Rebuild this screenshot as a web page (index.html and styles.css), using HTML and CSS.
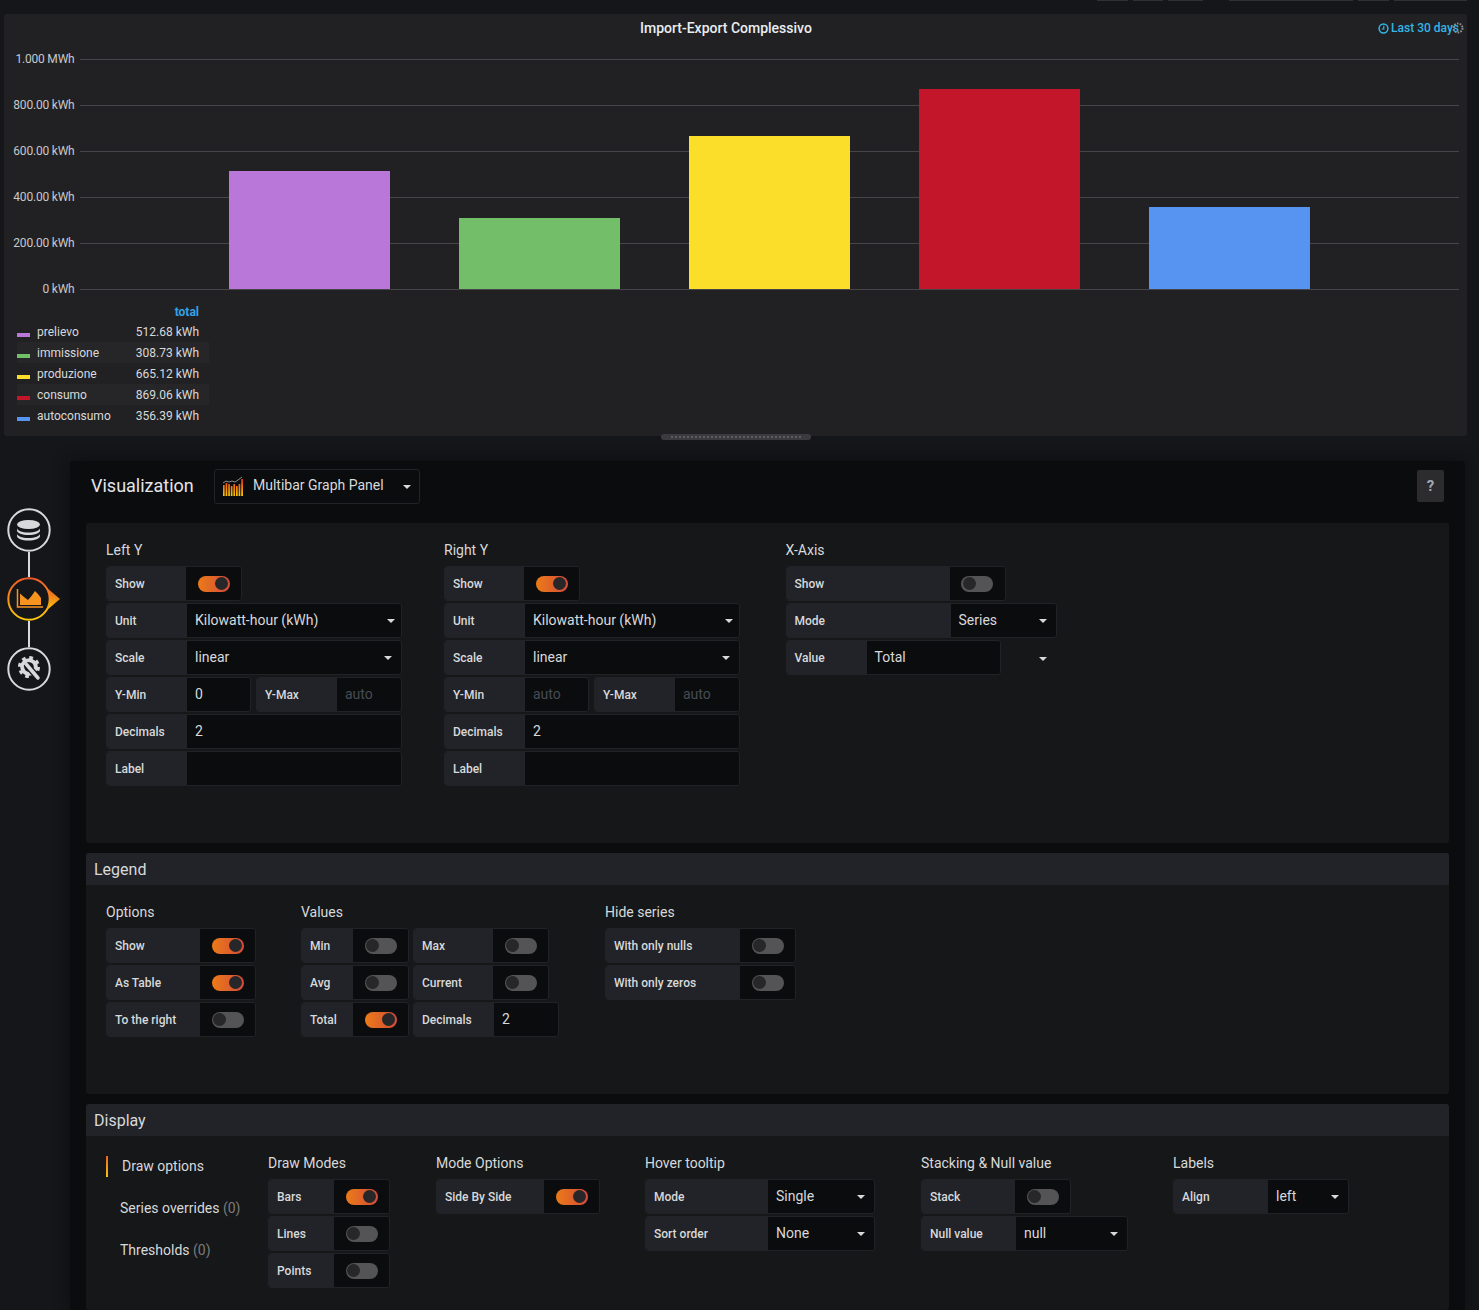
FILE: index.html
```html
<!DOCTYPE html>
<html lang="en">
<head>
    <meta charset="UTF-8">
    <meta name="viewport" content="width=device-width, initial-scale=1.0">
    <title>Import-Export Complessivo - Edit</title>
    <link rel="stylesheet" href="styles.css">
</head>
<body>

<!-- bottoms of the toolbar buttons, scrolled off the top -->
<div class="topstrip">
    <span class="stub w31"></span><span class="stub w30"></span><span class="stub w35 gap-big"></span>
    <span class="stub w124"></span><span class="stub w31"></span><span class="stub w73"></span>
</div>

<section class="panel">
    <header class="panel-head">
        <span></span>
        <h2 class="panel-title">Import-Export Complessivo</h2>
        <span class="panel-time">
            <svg class="clock" width="11" height="11" viewBox="0 0 11 11">
                <circle cx="5.5" cy="5.5" r="4.4" fill="none" stroke="#33b5e5" stroke-width="1.5"/>
                <path d="M5.8 2.8V6H3.6" fill="none" stroke="#33b5e5" stroke-width="1.2"/>
            </svg>Last 30 days
        </span>
        <svg class="spinner" width="12" height="12" viewBox="0 0 12 12">
            <circle cx="6" cy="6" r="4.5" fill="none" stroke="#8e8e8e" stroke-width="2" stroke-dasharray="1.6 1.2"/>
        </svg>
    </header>

    <svg class="chart" width="1463" height="258" viewBox="4 42 1463 258">
        <g class="grid">
            <line x1="80" x2="1459" y1="59.5" y2="59.5"/>
            <line x1="80" x2="1459" y1="105.5" y2="105.5"/>
            <line x1="80" x2="1459" y1="151.5" y2="151.5"/>
            <line x1="80" x2="1459" y1="197.5" y2="197.5"/>
            <line x1="80" x2="1459" y1="243.5" y2="243.5"/>
            <line x1="80" x2="1459" y1="289.5" y2="289.5"/>
        </g>
        <g class="ticks">
            <text x="74.5" y="63">1.000 MWh</text>
            <text x="74.5" y="109">800.00 kWh</text>
            <text x="74.5" y="155">600.00 kWh</text>
            <text x="74.5" y="201">400.00 kWh</text>
            <text x="74.5" y="247">200.00 kWh</text>
            <text x="74.5" y="293">0 kWh</text>
        </g>
        <rect x="229" y="171" width="161" height="118" fill="#b877d9"/>
        <rect x="459" y="218" width="161" height="71" fill="#73bf69"/>
        <rect x="689" y="136" width="161" height="153" fill="#fade2a"/>
        <rect x="919" y="89" width="161" height="200" fill="#c4162a"/>
        <rect x="1149" y="207" width="161" height="82" fill="#5794f2"/>
    </svg>

    <table class="legend">
        <tr class="legend-head"><th></th><th class="legend-total">total</th></tr>
        <tr><td><span class="swatch purple"></span>prelievo</td><td class="legend-val">512.68 kWh</td></tr>
        <tr><td><span class="swatch green"></span>immissione</td><td class="legend-val">308.73 kWh</td></tr>
        <tr><td><span class="swatch yellow"></span>produzione</td><td class="legend-val">665.12 kWh</td></tr>
        <tr><td><span class="swatch red"></span>consumo</td><td class="legend-val">869.06 kWh</td></tr>
        <tr><td><span class="swatch blue"></span>autoconsumo</td><td class="legend-val">356.39 kWh</td></tr>
    </table>

    <div class="resize-handle"></div>
</section>

<div class="main">
    <nav class="sidebar">
        <svg class="step" width="44" height="44" viewBox="0 0 44 44">
            <circle cx="22" cy="22" r="20.700" fill="none" stroke="#d8d9da" stroke-width="2"/>
            <ellipse cx="21.500" cy="16.500" rx="11.500" ry="4.500" fill="#d8d9da"/>
            <path d="M10 20v2.500c0 2.500 5 4.500 11.500 4.500s11.500-2 11.500-4.500V20c0 2.500-5 4.500-11.500 4.500S10 22.500 10 20z" fill="#d8d9da"/>
            <path d="M10 25.500V28c0 2.500 5 4.500 11.500 4.500S33 30.500 33 28v-2.500c0 2.500-5 4.500-11.500 4.500S10 28 10 25.500z" fill="#d8d9da"/>
        </svg>
        <div class="step-line"></div>
        <svg class="step" width="53" height="44" viewBox="0 0 53 44">
            <defs>
                <linearGradient id="stepGrad" x1="0" y1="0" x2="0" y2="1">
                    <stop offset="0" stop-color="#f05a28"/>
                    <stop offset="1" stop-color="#fbca0a"/>
                </linearGradient>
            </defs>
            <path d="M40 11L53 22 40 33z" fill="url(#stepGrad)"/>
            <circle cx="22" cy="22" r="20.700" fill="#141619" stroke="url(#stepGrad)" stroke-width="2"/>
            <path d="M13 28V16.500L17 20l4 3 3.500-4L28 14l3 3 3 4v7z" fill="#f79420"/>
            <path d="M10.500 12v18H36" fill="none" stroke="#f79420" stroke-width="1.500"/>
        </svg>
        <div class="step-line tall"></div>
        <svg class="step" width="44" height="44" viewBox="0 0 44 44">
            <circle cx="22" cy="22" r="20.700" fill="none" stroke="#d8d9da" stroke-width="2"/>
            <circle cx="22" cy="20" r="6.800" fill="none" stroke="#d8d9da" stroke-width="4"/>
            <circle cx="22" cy="20" r="9.500" fill="none" stroke="#d8d9da" stroke-width="3" stroke-dasharray="3.700 3.760"/>
            <path d="M19 17l12 14" stroke="#141619" stroke-width="6.500" fill="none"/>
            <path d="M19.500 17.500L31 31" stroke="#d8d9da" stroke-width="3.500" stroke-linecap="round" fill="none"/>
        </svg>
    </nav>

    <div class="editor">
        <div class="editor-head">
            <h3 class="editor-title">Visualization</h3>
            <div class="picker">
                <svg class="picker-icon" width="20" height="20" viewBox="0 0 20 20">
                    <defs>
                        <linearGradient id="barGrad" gradientUnits="userSpaceOnUse" x1="0" y1="3" x2="0" y2="20">
                            <stop offset="0" stop-color="#e0301e"/>
                            <stop offset="1" stop-color="#fbca0a"/>
                        </linearGradient>
                    </defs>
                    <path d="M0 7l3-2 3 1 3-1 3 1 3-2 4-3" fill="none" stroke="#8e8e8e" stroke-width="1"/>
                    <g fill="url(#barGrad)">
                        <rect x="0" y="9" width="1.700" height="11"/>
                        <rect x="2.600" y="7" width="1.700" height="13"/>
                        <rect x="5.200" y="8" width="1.700" height="12"/>
                        <rect x="7.800" y="10" width="1.700" height="10"/>
                        <rect x="10.400" y="8" width="1.700" height="12"/>
                        <rect x="13" y="10" width="1.700" height="10"/>
                        <rect x="15.600" y="8" width="1.700" height="12"/>
                        <rect x="18.200" y="3" width="1.800" height="17"/>
                    </g>
                </svg>
                <span class="picker-name">Multibar Graph Panel</span>
                <i class="caret"></i>
            </div>
            <button class="help">?</button>
        </div>

        <div class="section first">
            <div class="section-body">
                <div class="col col-lefty">
                    <h5 class="col-title">Left Y</h5>
                    <div class="row"><div class="group"><label class="lbl w80">Show</label><div class="toggle"><span class="switch on"></span></div></div></div>
                    <div class="row"><div class="group"><label class="lbl w81">Unit</label><div class="field w215"><span>Kilowatt-hour (kWh)</span><i class="caret near"></i></div></div></div>
                    <div class="row"><div class="group"><label class="lbl w81">Scale</label><div class="field w215"><span>linear</span><i class="caret"></i></div></div></div>
                    <div class="row">
                        <div class="group"><label class="lbl w81">Y-Min</label><div class="field w64"><span>0</span></div></div>
                        <div class="group"><label class="lbl w81">Y-Max</label><div class="field w65 ph"><span>auto</span></div></div>
                    </div>
                    <div class="row"><div class="group"><label class="lbl w81">Decimals</label><div class="field w215"><span>2</span></div></div></div>
                    <div class="row"><div class="group"><label class="lbl w81">Label</label><div class="field w215"></div></div></div>
                </div>
                <div class="col col-righty">
                    <h5 class="col-title">Right Y</h5>
                    <div class="row"><div class="group"><label class="lbl w80">Show</label><div class="toggle"><span class="switch on"></span></div></div></div>
                    <div class="row"><div class="group"><label class="lbl w81">Unit</label><div class="field w215"><span>Kilowatt-hour (kWh)</span><i class="caret near"></i></div></div></div>
                    <div class="row"><div class="group"><label class="lbl w81">Scale</label><div class="field w215"><span>linear</span><i class="caret"></i></div></div></div>
                    <div class="row">
                        <div class="group"><label class="lbl w81">Y-Min</label><div class="field w64 ph"><span>auto</span></div></div>
                        <div class="group"><label class="lbl w81">Y-Max</label><div class="field w65 ph"><span>auto</span></div></div>
                    </div>
                    <div class="row"><div class="group"><label class="lbl w81">Decimals</label><div class="field w215"><span>2</span></div></div></div>
                    <div class="row"><div class="group"><label class="lbl w81">Label</label><div class="field w215"></div></div></div>
                </div>
                <div class="col">
                    <h5 class="col-title">X-Axis</h5>
                    <div class="row"><div class="group"><label class="lbl w164">Show</label><div class="toggle"><span class="switch"></span></div></div></div>
                    <div class="row"><div class="group"><label class="lbl w165">Mode</label><div class="field w106"><span>Series</span><i class="caret"></i></div></div></div>
                    <div class="row row-center"><div class="group"><label class="lbl w81">Value</label><div class="field w134"><span>Total</span></div></div><i class="caret outside"></i></div>
                </div>
            </div>
        </div>

        <div class="section legend-section">
            <div class="section-head">Legend</div>
            <div class="section-body">
                <div class="col col-options">
                    <h5 class="col-title">Options</h5>
                    <div class="row"><div class="group"><label class="lbl w94">Show</label><div class="toggle"><span class="switch on"></span></div></div></div>
                    <div class="row"><div class="group"><label class="lbl w94">As Table</label><div class="toggle"><span class="switch on"></span></div></div></div>
                    <div class="row"><div class="group"><label class="lbl w94">To the right</label><div class="toggle"><span class="switch"></span></div></div></div>
                </div>
                <div class="col col-values">
                    <h5 class="col-title">Values</h5>
                    <div class="row tight">
                        <div class="group"><label class="lbl w52">Min</label><div class="toggle"><span class="switch"></span></div></div>
                        <div class="group"><label class="lbl w80">Max</label><div class="toggle"><span class="switch"></span></div></div>
                    </div>
                    <div class="row tight">
                        <div class="group"><label class="lbl w52">Avg</label><div class="toggle"><span class="switch"></span></div></div>
                        <div class="group"><label class="lbl w80">Current</label><div class="toggle"><span class="switch"></span></div></div>
                    </div>
                    <div class="row tight">
                        <div class="group"><label class="lbl w52">Total</label><div class="toggle"><span class="switch on"></span></div></div>
                        <div class="group"><label class="lbl w81">Decimals</label><div class="field w65"><span>2</span></div></div>
                    </div>
                </div>
                <div class="col">
                    <h5 class="col-title">Hide series</h5>
                    <div class="row"><div class="group"><label class="lbl w135">With only nulls</label><div class="toggle"><span class="switch"></span></div></div></div>
                    <div class="row"><div class="group"><label class="lbl w135">With only zeros</label><div class="toggle"><span class="switch"></span></div></div></div>
                </div>
            </div>
        </div>

        <div class="section display-section">
            <div class="section-head">Display</div>
            <div class="section-body">
                <ul class="tabs">
                    <li class="tab active">Draw options</li>
                    <li class="tab">Series overrides <span class="muted">(0)</span></li>
                    <li class="tab">Thresholds <span class="muted">(0)</span></li>
                </ul>
                <div class="col col-modes">
                    <h5 class="col-title">Draw Modes</h5>
                    <div class="row"><div class="group"><label class="lbl w66">Bars</label><div class="toggle"><span class="switch on"></span></div></div></div>
                    <div class="row"><div class="group"><label class="lbl w66">Lines</label><div class="toggle"><span class="switch"></span></div></div></div>
                    <div class="row"><div class="group"><label class="lbl w66">Points</label><div class="toggle"><span class="switch"></span></div></div></div>
                </div>
                <div class="col col-modeopts">
                    <h5 class="col-title">Mode Options</h5>
                    <div class="row"><div class="group"><label class="lbl w108">Side By Side</label><div class="toggle"><span class="switch on"></span></div></div></div>
                </div>
                <div class="col col-hover">
                    <h5 class="col-title">Hover tooltip</h5>
                    <div class="row"><div class="group"><label class="lbl w122">Mode</label><div class="field w107"><span>Single</span><i class="caret"></i></div></div></div>
                    <div class="row"><div class="group"><label class="lbl w122">Sort order</label><div class="field w107"><span>None</span><i class="caret"></i></div></div></div>
                </div>
                <div class="col col-stack">
                    <h5 class="col-title">Stacking &amp; Null value</h5>
                    <div class="row"><div class="group"><label class="lbl w94">Stack</label><div class="toggle"><span class="switch"></span></div></div></div>
                    <div class="row"><div class="group"><label class="lbl w95">Null value</label><div class="field w112"><span>null</span><i class="caret"></i></div></div></div>
                </div>
                <div class="col">
                    <h5 class="col-title">Labels</h5>
                    <div class="row"><div class="group"><label class="lbl w95">Align</label><div class="field w80"><span>left</span><i class="caret"></i></div></div></div>
                </div>
            </div>
        </div>
    </div>
</div>

</body>
</html>
```

FILE: styles.css
```css
* {
    box-sizing: border-box;
}

html, body {
    margin: 0;
    height: 1310px;
    overflow: hidden;
}

body {
    background-color: #141619;
    color: #d8d9da;
    font-family: Roboto, "Liberation Sans", sans-serif;
    font-size: 14px;
}

h2, h3, h5, ul {
    margin: 0;
    padding: 0;
    font-weight: 400;
}

/* top strip */
.topstrip {
    display: flex;
    justify-content: flex-end;
    gap: 5px;
    height: 14px;
    padding-right: 12px;
}

.stub {
    height: 1px;
    background-color: #303135;
}

.stub.w31 { width: 31px; }
.stub.w30 { width: 30px; }
.stub.w35 { width: 35px; }
.stub.w124 { width: 124px; }
.stub.w73 { width: 73px; }
.gap-big { margin-right: 21px; }

/* graph panel */
.panel {
    position: relative;
    width: 1463px;
    height: 422px;
    margin-left: 4px;
    background-color: #212124;
    border-radius: 3px;
}

.panel-head {
    position: relative;
    display: grid;
    grid-template-columns: 636px auto 1fr;
    height: 28px;
    line-height: 28px;
}

.panel-title {
    font-size: 14px;
    font-weight: 500;
    color: #e9edf2;
}

.panel-time {
    justify-self: end;
    padding-right: 8px;
    font-size: 12px;
    font-weight: 500;
    color: #33b5e5;
}

.clock {
    margin-right: 2px;
    vertical-align: -2px;
}

.spinner {
    position: absolute;
    top: 8px;
    right: 3px;
}

.chart {
    display: block;
}

.grid line {
    stroke: #46464a;
    stroke-width: 1;
}

.ticks text {
    fill: #c7c8ca;
    font-size: 12px;
    letter-spacing: -0.2px;
    text-anchor: end;
}

.legend {
    margin: 1px 0 0 13px;
    width: 192px;
    border-collapse: collapse;
    font-size: 12px;
    color: #d8d9da;
}

.legend tr {
    height: 21px;
}

.legend tr.legend-head {
    height: 20px;
}

.legend tr:nth-child(odd) td {
    background-color: #262628;
}

.legend td, .legend th {
    padding: 0;
}

.legend-total, .legend-val {
    padding-right: 10px !important;
    text-align: right;
}

.legend-total {
    padding-top: 2px !important;
    font-weight: 700;
    color: #33a2e5;
}

.swatch {
    display: inline-block;
    width: 13px;
    height: 4px;
    margin-right: 7px;
    vertical-align: -1px;
}

.purple { background-color: #b877d9; }
.green { background-color: #73bf69; }
.yellow { background-color: #fade2a; }
.red { background-color: #c4162a; }
.blue { background-color: #5794f2; }

.resize-handle {
    position: absolute;
    left: 657px;
    bottom: -4px;
    width: 150px;
    height: 6px;
    border-radius: 3px;
    background: repeating-linear-gradient(90deg, #5c5c60 0 2px, transparent 2px 4px) center / 130px 2px no-repeat, #3b3b3e;
}

/* edit area */
.main {
    display: flex;
    margin-top: 25px;
}

.sidebar {
    display: flex;
    flex-direction: column;
    width: 70px;
    padding: 47px 0 0 7px;
}

.step {
    display: block;
}

.step-line {
    width: 2px;
    height: 25px;
    margin-left: 21px;
    background-color: #d8d9da;
}

.step-line.tall {
    height: 26px;
}

.editor {
    width: 1395px;
    height: 849px;
    padding: 0 16px;
    background-color: #0b0c0e;
    border-radius: 3px 3px 0 0;
    box-shadow: 0 0 16px rgba(11, 12, 14, 0.8);
}

.editor-head {
    display: flex;
    align-items: flex-start;
    height: 62px;
    padding: 8px 5px 0 5px;
}

.editor-title {
    width: 123px;
    font-size: 18px;
    line-height: 33px;
    color: #e3e5e8;
}

.picker {
    display: flex;
    align-items: center;
    width: 206px;
    height: 35px;
    padding: 0 7px 0 8px;
    border: 1px solid #212328;
    border-radius: 3px;
}

.picker .caret {
    margin-right: 1px;
}

.picker-icon {
    margin: -2px 10px 0 0;
}

.picker-name {
    flex: 1;
    margin-top: -3px;
}

.help {
    width: 27px;
    height: 32px;
    margin: 1px 0 0 auto;
    padding: 0;
    border: none;
    border-radius: 2px;
    background-color: #2c2c2f;
    color: #9fa7b3;
    font-family: Roboto, "Liberation Sans", sans-serif;
    font-size: 15px;
    font-weight: 700;
}

.section {
    margin-bottom: 10px;
    background-color: #161719;
    border-radius: 3px;
}

.first { height: 320px; }
.legend-section { height: 241px; }
.display-section { height: 206px; margin-bottom: 0; }

.section-head {
    height: 32px;
    padding-left: 8px;
    background-color: #212328;
    font-size: 16px;
    line-height: 33px;
    color: #d8d9da;
    border-radius: 3px 3px 0 0;
}

.section-body {
    display: flex;
    padding: 15px 0 0 20px;
}

.col-title {
    height: 24px;
    margin-bottom: 4px;
    font-size: 14px;
    line-height: 24px;
}

.col-lefty { width: 338px; }
.col-righty { width: 341.5px; }
.col-options { width: 195px; }
.col-values { width: 304px; }
.col-modes { width: 168px; }
.col-modeopts { width: 209px; }
.col-hover { width: 276px; }
.col-stack { width: 252px; }

.row {
    display: flex;
    gap: 5px;
    margin-bottom: 2px;
}

.row.tight {
    gap: 4px;
}

.row-center {
    align-items: center;
}

.group {
    display: flex;
    height: 35px;
    border: 1px solid #202226;
    border-radius: 3px;
    overflow: hidden;
    background-color: #0b0c0e;
}

.lbl {
    display: flex;
    align-items: center;
    padding-left: 8px;
    background-color: #212328;
    font-size: 12px;
    font-weight: 500;
    color: #d8d9da;
}

.lbl.w52 { width: 51px; }
.lbl.w66 { width: 65px; }
.lbl.w80 { width: 79px; }
.lbl.w81 { width: 80px; }
.lbl.w94 { width: 93px; }
.lbl.w95 { width: 94px; }
.lbl.w108 { width: 107px; }
.lbl.w122 { width: 122px; }
.lbl.w135 { width: 134px; }
.lbl.w164 { width: 163px; }
.lbl.w165 { width: 164px; }

.toggle {
    display: flex;
    align-items: center;
    justify-content: center;
    width: 55px;
}

.switch {
    position: relative;
    display: block;
    width: 32px;
    height: 16px;
    border-radius: 8px;
    background-color: #545456;
}

.switch::after {
    content: "";
    position: absolute;
    top: 1.5px;
    left: 1.5px;
    width: 13px;
    height: 13px;
    border-radius: 50%;
    background-color: #27272a;
}

.switch.on {
    background: linear-gradient(90deg, #eb7b18, #d44a3a);
}

.switch.on::after {
    left: auto;
    right: 1.5px;
}

.field {
    display: flex;
    align-items: center;
    justify-content: space-between;
    padding: 0 0 0 8px;
    font-size: 14px;
}

.field.w64 { width: 63px; }
.field.w65 { width: 64px; }
.field.w80 { width: 80px; }
.field.w106 { width: 105px; }
.field.w107 { width: 106px; }
.field.w112 { width: 111px; }
.field.w134 { width: 133px; }
.field.w215 { width: 214px; }

.field span {
    margin-top: -2px;
}

.ph {
    color: #464c54;
}

.caret {
    display: block;
    width: 0;
    height: 0;
    margin-right: 9px;
    border-left: 4px solid transparent;
    border-right: 4px solid transparent;
    border-top: 4px solid #d8d9da;
}

.caret.near {
    margin-right: 6px;
}

.caret.outside {
    margin: 2px 0 0 33px;
}

/* display tabs */
.tabs {
    width: 162px;
    margin-top: 5px;
    list-style: none;
}

.tab {
    height: 21px;
    margin-bottom: 21px;
    padding-left: 14px;
    line-height: 21px;
}

.tab.active {
    border-left: 2px solid;
    border-image: linear-gradient(#f05a28, #fbca0a) 1;
}

.muted {
    color: #7b7b7b;
}
```
